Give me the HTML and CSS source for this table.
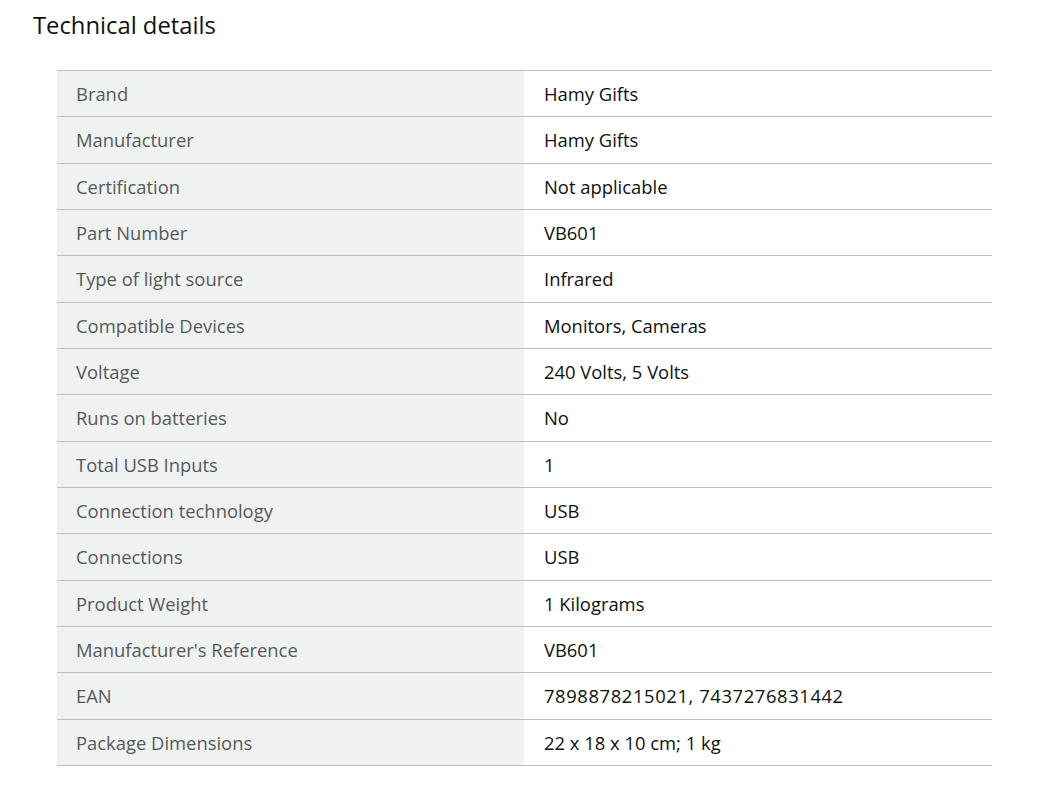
FILE: index.html
```html
<!DOCTYPE html>
<html>
<head>
<meta charset="utf-8">
<link rel="stylesheet" href="styles.css">
</head>
<body>
<div class="section">
  <h2 class="title">Technical details</h2>
  <table class="specs">
    <tbody>
      <tr><th>Brand</th><td>Hamy Gifts</td></tr>
      <tr><th>Manufacturer</th><td>Hamy Gifts</td></tr>
      <tr><th>Certification</th><td>Not applicable</td></tr>
      <tr><th>Part Number</th><td>VB601</td></tr>
      <tr><th>Type of light source</th><td>Infrared</td></tr>
      <tr><th>Compatible Devices</th><td>Monitors, Cameras</td></tr>
      <tr><th>Voltage</th><td>240 Volts, 5 Volts</td></tr>
      <tr><th>Runs on batteries</th><td>No</td></tr>
      <tr><th>Total USB Inputs</th><td>1</td></tr>
      <tr><th>Connection technology</th><td>USB</td></tr>
      <tr><th>Connections</th><td>USB</td></tr>
      <tr><th>Product Weight</th><td>1 Kilograms</td></tr>
      <tr><th>Manufacturer's Reference</th><td>VB601</td></tr>
      <tr><th>EAN</th><td class="num">7898878215021, 7437276831442</td></tr>
      <tr><th>Package Dimensions</th><td>22 x 18 x 10 cm; 1 kg</td></tr>
    </tbody>
  </table>
</div>
</body>
</html>
```
FILE: styles.css
```css
html, body {
  margin: 0;
  padding: 0;
  background: #fff;
}
body {
  font-family: "Open Sans", "Noto Sans", Arial, sans-serif;
  color: #0f1111;
}
.section {
  padding: 9px 0 0 33px;
}
.title {
  margin: 0 0 29px 0;
  font-size: 23.8px;
  font-weight: 400;
  line-height: 32px;
  color: #0f1111;
}
.specs {
  margin-left: 24px;
  width: 935px;
  border-collapse: collapse;
  border-bottom: 1px solid #bbbfbf;
}
.specs tr {
  border-top: 1px solid #bbbfbf;
}
.specs th, .specs td {
  height: 46.33px;
  padding: 0 20px;
  font-size: 18.4px;
  font-weight: 400;
  text-align: left;
  vertical-align: middle;
  box-sizing: border-box;
}
.specs th {
  width: 467px;
  padding-left: 19px;
  background: #f0f2f2;
  color: #565959;
}
.specs td {
  color: #0f1111;
}
.specs td.num {
  letter-spacing: 0.6px;
}
```
